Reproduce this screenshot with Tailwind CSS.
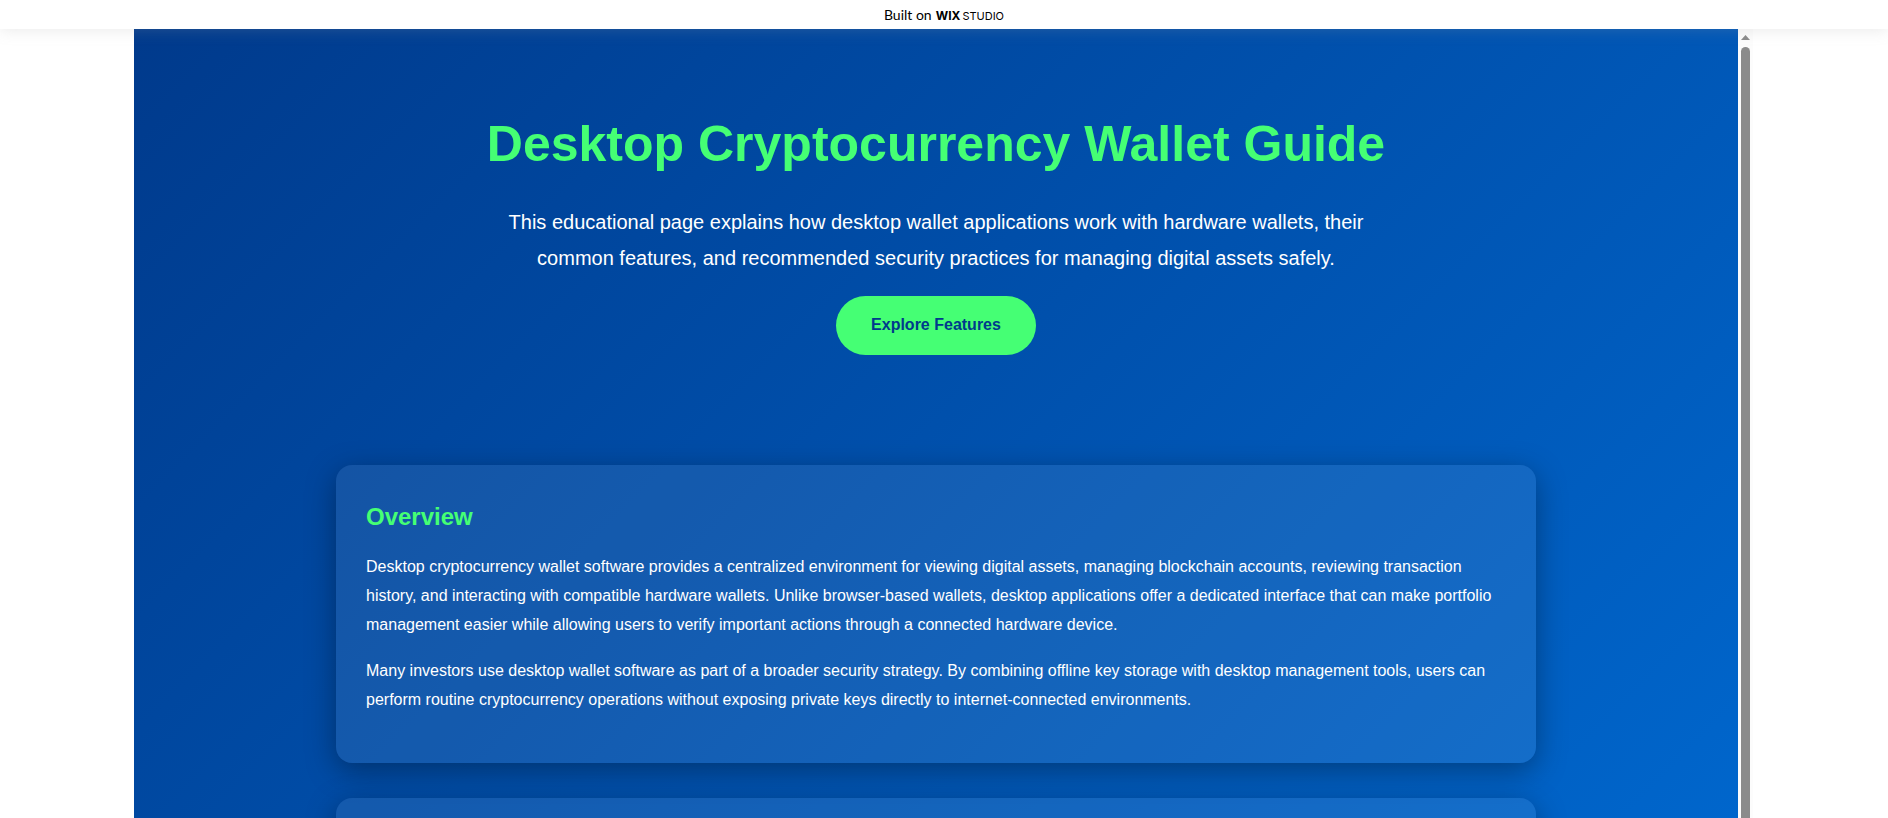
<!DOCTYPE html>
<html lang="en">
<head>
    <meta charset="UTF-8">
    <meta name="viewport" content="width=device-width, initial-scale=1.0">
    <title>Desktop Cryptocurrency Wallet Guide</title>
    <script src="https://cdn.jsdelivr.net/npm/@tailwindcss/browser@4"></script>
</head>
<body class="flex flex-col h-screen overflow-hidden bg-white font-['Liberation_Sans',Arial,sans-serif]">
    <!-- Top banner -->
    <a href="#" class="relative z-10 flex items-baseline justify-center gap-1 h-[29px] pt-1 shrink-0 bg-white text-black shadow-[0_0_16px_rgba(160,160,160,0.25)] font-['Open_Sans',sans-serif]">
        <span class="text-[14px] font-['Lato',sans-serif]">Built on</span>
        <span class="flex items-baseline gap-0.5 text-xs font-['Inter',sans-serif]"><span class="font-bold">WIX</span><span class="text-[11px] font-normal">STUDIO</span></span>
    </a>

    <!-- Embedded page -->
    <div class="flex flex-1 min-h-0 w-full max-w-[1620px] mx-auto">
        <main class="flex-1 min-w-0 overflow-hidden bg-[linear-gradient(135deg,#003a8c,#0066cc)] text-white">
            <header class="flex flex-col items-center px-5 pt-20 pb-[110px] text-center">
                <h1 class="text-[50px] leading-[70px] font-bold text-[#45ff74]">Desktop Cryptocurrency Wallet Guide</h1>
                <p class="max-w-[900px] mt-[25px] mb-5 text-xl leading-9">This educational page explains how desktop wallet applications work with hardware wallets, their common features, and recommended security practices for managing digital assets safely.</p>
                <a href="#overview" class="px-[35px] pt-[14px] pb-4 rounded-full bg-[#45ff74] text-[#003a8c] text-base leading-[29px] font-bold">Explore Features</a>
            </header>

            <div class="flex flex-col gap-[35px] w-full max-w-[1200px] mx-auto">
                <section id="overview" class="px-[30px] pt-[30px] pb-8 rounded-2xl bg-white/8 shadow-[0_8px_30px_rgba(0,0,0,0.35)]">
                    <h2 class="mb-[14px] text-2xl leading-[43px] font-bold text-[#45ff74]">Overview</h2>
                    <p class="mb-[17px] text-base leading-[29px]">Desktop cryptocurrency wallet software provides a centralized environment for viewing digital assets, managing blockchain accounts, reviewing transaction history, and interacting with compatible hardware wallets. Unlike browser-based wallets, desktop applications offer a dedicated interface that can make portfolio management easier while allowing users to verify important actions through a connected hardware device.</p>
                    <p class="mb-[17px] text-base leading-[29px]">Many investors use desktop wallet software as part of a broader security strategy. By combining offline key storage with desktop management tools, users can perform routine cryptocurrency operations without exposing private keys directly to internet-connected environments.</p>
                </section>
                <section class="h-72 rounded-2xl bg-white/8 shadow-[0_8px_30px_rgba(0,0,0,0.35)]"></section>
            </div>
        </main>

        <!-- Scrollbar -->
        <div class="flex flex-col gap-[7px] w-[15px] mr-px pl-[3px] pt-[6px] bg-[#fcfcfc]" aria-hidden="true">
            <svg class="w-[9px] h-[5px] shrink-0" viewBox="0 0 9 5"><path d="M4.5 0 9 5H0z" fill="#8b8b8b"/></svg>
            <div class="flex-1 w-[9px] rounded-t-full bg-[#8b8b8b]"></div>
        </div>
    </div>
</body>
</html>
